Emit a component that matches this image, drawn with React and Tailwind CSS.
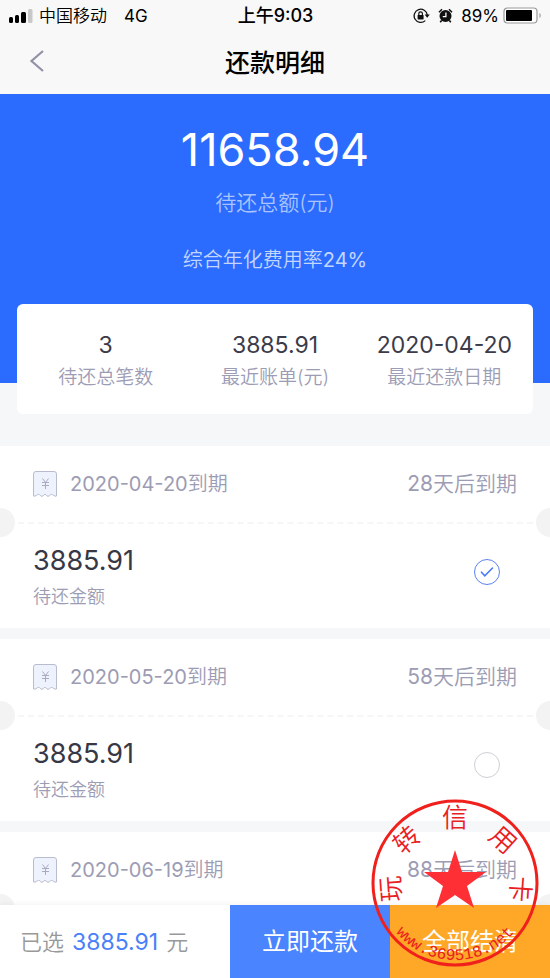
import React, { useState } from "react";

const BILLS = [
  { id: "b1", date: "2020-04-20", days: 28, amount: "3885.91" },
  { id: "b2", date: "2020-05-20", days: 58, amount: "3885.91" },
  { id: "b3", date: "2020-06-19", days: 88, amount: "3887.12" },
];

const SUMMARY = [
  { label: "待还总笔数", value: "3" },
  { label: "最近账单(元)", value: "3885.91" },
  { label: "最近还款日期", value: "2020-04-20" },
];

function SignalIcon() {
  return (
    <svg width="25" height="14" viewBox="0 0 25 14" aria-hidden="true">
      <rect x="0" y="8" width="4" height="6" rx="1.5" />
      <rect x="6" y="6" width="4" height="8" rx="1.5" />
      <rect x="12" y="3" width="5" height="11" rx="1.5" />
      <rect x="19" y="0" width="4.5" height="14" rx="1.5" fill="#c8c8c8" />
    </svg>
  );
}

function RotationLockIcon() {
  return (
    <svg width="17" height="16" viewBox="0 0 17 16" fill="none" aria-hidden="true">
      <path d="M12.3 12.6A6.6 6.6 0 1 1 14.3 7" stroke="#111" strokeWidth="1.3" />
      <path d="M11.6 6.6h5.2l-2.6 3.2z" fill="#111" />
      <rect x="4.6" y="7" width="6" height="4.4" rx=".6" fill="#111" />
      <path d="M5.8 7V5.6a1.8 1.8 0 0 1 3.6 0V7" stroke="#111" strokeWidth="1.2" />
    </svg>
  );
}

function AlarmIcon() {
  return (
    <svg width="15" height="15" viewBox="0 0 15 15" fill="none" aria-hidden="true">
      <circle cx="7.5" cy="8" r="6" fill="#111" />
      <path d="M1 4.2 4 1.3M14 4.2l-3-2.9" stroke="#111" strokeWidth="1.5" />
      <path d="m3.6 12.4-1.4 1.8m9.2-1.8 1.4 1.8" stroke="#111" strokeWidth="1.6" />
      <path d="M7.9 4.4v4.2H4.8" stroke="#fff" strokeWidth="1.3" />
    </svg>
  );
}

function BatteryIcon() {
  return (
    <svg width="39" height="17" viewBox="0 0 39 17" aria-hidden="true">
      <rect x="1" y="1" width="33" height="15" rx="3.5" fill="#fff" stroke="#999" strokeWidth="1.2" />
      <rect x="3" y="3" width="26" height="11" rx="1" fill="#000" />
      <path d="M36.5 6c1.6.6 1.6 4.4 0 5z" fill="#999" />
    </svg>
  );
}

function ReceiptIcon() {
  return (
    <svg width="24" height="26" viewBox="0 0 24 26" fill="none" aria-hidden="true">
      <path
        d="M.5 25V3A2.5 2.5 0 0 1 3 .5h18A2.5 2.5 0 0 1 23.5 3v22c-2.3.9-3.3-1.6-5-1.6s-1.8 1.9-3.5 1.9-1.5-1.9-3-1.9-1.3 1.9-3 1.9-1.800-1.900-3.500-1.900-2.700 2.500-5 1.600z"
        fill="#edf2fd"
        stroke="#b9bbce"
      />
      <path d="m9.5 7.5 3 4 3-4M12.5 11.5V18M9 11.5h7M9 14.5h7" stroke="#a9abc3" />
    </svg>
  );
}

function Stamp() {
  return (
    <svg
      className="pointer-events-none absolute right-[11px] bottom-[11px] z-20 overflow-visible font-['Noto_Sans_CJK_SC',sans-serif] font-[350]"
      width="168"
      height="168"
      viewBox="-84 -84 168 168"
      fill="#e9201f"
      role="img"
      aria-label="玩转信用卡"
    >
      <circle r="82" fill="none" stroke="#f0201c" strokeWidth="3" />
      <path
        d="M0-33 7-11H31L12 3 19 25 0 12-19 25-12 3-31-11H-7Z"
        fill="#ff3035"
      />
      <g fontSize="26" textAnchor="middle">
        <text transform="translate(-64 6) rotate(-94)" y="9">玩</text>
        <text transform="translate(-48 -43) rotate(-42)" y="9">转</text>
        <text transform="translate(0 -65)" y="9">信</text>
        <text transform="translate(48 -43) rotate(42)" y="9">用</text>
        <text transform="translate(65 6) rotate(94)" y="9">卡</text>
      </g>
      <path id="stamp-arc" d="M-61 47A77 77 0 0 0 61 47" fill="none" />
      <text className="font-['Liberation_Mono',monospace]" fontSize="16" textAnchor="middle">
        <textPath href="#stamp-arc" startOffset="50%">www.369518.net</textPath>
      </text>
    </svg>
  );
}

function BillCard({ bill, checked, onToggle }) {
  return (
    <li className="overflow-hidden bg-white">
      <div className="flex items-center justify-between px-[33px] pt-[25px] pb-[11px] leading-[26px] text-[#9c9cb4]">
        <div className="flex items-center gap-[13px]">
          <ReceiptIcon />
          <span className="text-[20px]">
            {bill.date}
            <span className="font-[350]">到期</span>
          </span>
        </div>
        <span className="text-[21px]">
          {bill.days}
          <span className="font-[350]">天后到期</span>
        </span>
      </div>
      <div className="flex items-center">
        <span className="-ml-[14px] size-[29px] rounded-full bg-[#f3f3f3]" />
        <span className="mx-[3px] flex-1 border-t-2 border-dashed border-[#f6f6f7]" />
        <span className="-mr-[15px] size-[29px] rounded-full bg-[#f3f3f3]" />
      </div>
      <label htmlFor={bill.id} className="flex cursor-pointer items-start justify-between pr-[50px] pb-[17px] pl-[33px]">
        <span className="flex flex-col gap-[6px] pt-2">
          <span className="text-[27px] leading-8 text-[#373745]">{bill.amount}</span>
          <span className="text-[18px] leading-7 font-[350] text-[#9c9cb4]">待还金额</span>
        </span>
        <span className="mt-[22px] grid size-[26px] place-items-center">
          <input
            id={bill.id}
            type="checkbox"
            checked={checked}
            onChange={onToggle}
            className="peer col-start-1 row-start-1 size-[26px] appearance-none rounded-full border border-[#cfcfd6] bg-white checked:border-[#5b83f0]"
          />
          <svg
            className="pointer-events-none col-start-1 row-start-1 hidden peer-checked:block"
            width="14"
            height="12"
            viewBox="0 0 14 12"
            fill="none"
            aria-hidden="true"
          >
            <path d="m1.5 6.2 3.3 3.6L12.5 2" stroke="#4a7af5" strokeWidth="1.6" strokeLinecap="round" />
          </svg>
        </span>
      </label>
    </li>
  );
}

export default function App() {
  const [selected, setSelected] = useState({ b1: true });
  const toggle = (id) => setSelected((s) => ({ ...s, [id]: !s[id] }));

  return (
    <div className="relative flex h-screen flex-col overflow-hidden bg-[#f6f7f9] font-[Inter,'Noto_Sans_CJK_SC',sans-serif]">
      <header className="bg-[#f8f8f8] text-black">
        <div className="grid h-[31px] grid-cols-[1fr_auto_1fr] items-center pr-2 pl-[9px] text-[17px] leading-6">
          <div className="flex items-center gap-[5px]">
            <SignalIcon />
            <span className="font-[350]">中国移动</span>
            <span className="ml-3">4G</span>
          </div>
          <span className="text-[18px] font-medium">上午9:03</span>
          <div className="flex items-center justify-end gap-2">
            <RotationLockIcon />
            <AlarmIcon />
            <div className="flex items-center gap-1">
              <span>89%</span>
              <BatteryIcon />
            </div>
          </div>
        </div>
        <div className="grid h-[63px] grid-cols-[1fr_auto_1fr] items-center">
          <button type="button" aria-label="返回" className="ml-[28px] w-fit pb-1">
            <svg width="18" height="24" viewBox="0 0 18 24" fill="none" aria-hidden="true">
              <path d="M15 2 3.5 12 15 22" stroke="#9292a6" strokeWidth="2.2" />
            </svg>
          </button>
          <h1 className="text-[25px] leading-8 font-medium">还款明细</h1>
        </div>
      </header>

      <main className="min-h-0 flex-1 overflow-y-auto [scrollbar-width:none]">
        <section className="flex flex-col items-center bg-[#2b6cff] pt-[30px] pb-[108px] text-white">
          <p className="text-[45px] leading-[52px]">11658.94</p>
          <p className="mt-[12px] text-[21px] leading-[30px] font-[350] text-[#a9c4ff]">待还总额(元)</p>
          <p className="mt-[27px] text-[20px] leading-[30px] text-[#c3d6ff]">
            <span className="font-[350]">综合年化费用率</span>24%
          </p>
        </section>

        <dl className="relative mx-[17px] -mt-[79px] grid h-[110px] grid-cols-3 rounded-md bg-white px-1 pt-[26px]">
          {SUMMARY.map((item) => (
            <div key={item.label} className="flex flex-col-reverse items-center justify-end gap-1">
              <dt className="text-[19px] leading-7 font-[350] whitespace-nowrap text-[#9c9cb4]">{item.label}</dt>
              <dd className="text-[23px] leading-[30px] whitespace-nowrap text-[#3b3b49]">{item.value}</dd>
            </div>
          ))}
        </dl>

        <ul className="mt-8 flex flex-col gap-[11px]">
          {BILLS.map((bill) => (
            <BillCard
              key={bill.id}
              bill={bill}
              checked={!!selected[bill.id]}
              onToggle={() => toggle(bill.id)}
            />
          ))}
        </ul>
      </main>

      <footer className="relative z-10 grid h-[73px] grid-cols-[230fr_160fr_160fr] bg-white shadow-[0_-2px_4px_rgba(0,0,0,0.04)]">
        <p className="flex items-center gap-2 pl-5 text-[22px] leading-8 font-[350] whitespace-nowrap text-[#999]">
          已选 <span className="text-[23px] font-normal text-[#4a80f8]">3885.91</span> 元
        </p>
        <button type="button" className="bg-[#4a84ff] text-[24px] leading-8 text-white">
          立即还款
        </button>
        <button type="button" className="bg-[#ffa726] text-[24px] leading-8 text-white">
          全部结清
        </button>
      </footer>

      <Stamp />
    </div>
  );
}
